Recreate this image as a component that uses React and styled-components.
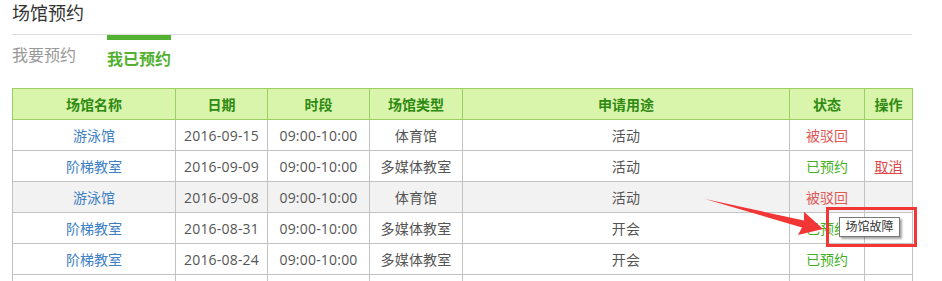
import styled, { createGlobalStyle } from 'styled-components';

const GlobalStyle = createGlobalStyle`
  body {
    margin: 0;
    background: #fff;
    font-family: "Open Sans", "Noto Sans CJK SC", sans-serif;
  }
`;

const columns = [
  {title: '场馆名称', width: 163},
  {title: '日期', width: 92},
  {title: '时段', width: 102},
  {title: '场馆类型', width: 93},
  {title: '申请用途', width: 327},
  {title: '状态', width: 75},
  {title: '操作', width: 48},
];

const rows = [
  {venue: '游泳馆', date: '2016-09-15', time: '09:00-10:00', type: '体育馆', use: '活动', state: 'rejected'},
  {venue: '阶梯教室', date: '2016-09-09', time: '09:00-10:00', type: '多媒体教室', use: '活动', state: 'booked', cancel: true},
  {venue: '游泳馆', date: '2016-09-08', time: '09:00-10:00', type: '体育馆', use: '活动', state: 'rejected', shaded: true},
  {venue: '阶梯教室', date: '2016-08-31', time: '09:00-10:00', type: '多媒体教室', use: '开会', state: 'booked'},
  {venue: '阶梯教室', date: '2016-08-24', time: '09:00-10:00', type: '多媒体教室', use: '开会', state: 'booked'},
];

const stateText = {rejected: '被驳回', booked: '已预约'};

function App() {
  return (
    <>
      <GlobalStyle />
      <Page>
        <Title>场馆预约</Title>
        <TabBar>
          <Tab>我要预约</Tab>
          <Tab active>我已预约</Tab>
        </TabBar>
        <Table>
          <colgroup>
            {columns.map((c) => (
              <Col key={c.title} $w={c.width} />
            ))}
          </colgroup>
          <thead>
            <tr>
              {columns.map((c) => (
                <Th key={c.title}>{c.title}</Th>
              ))}
            </tr>
          </thead>
          <tbody>
            {rows.map((r, i) => (
              <Row key={i} shaded={r.shaded}>
                <Td><VenueLink>{r.venue}</VenueLink></Td>
                <Td>{r.date}</Td>
                <Td>{r.time}</Td>
                <Td>{r.type}</Td>
                <Td>{r.use}</Td>
                <Td><State state={r.state}>{stateText[r.state]}</State></Td>
                <Td>{r.cancel && <Cancel>取消</Cancel>}</Td>
              </Row>
            ))}
            {/* 下一行只露出边框 */}
            <Row>
              {columns.map((c) => (
                <Td key={c.title} />
              ))}
            </Row>
          </tbody>
        </Table>

        <Arrow width="942" height="281" viewBox="0 0 942 281">
          <polygon
            points="705,199 804,220.5 804,211.8 823,229 798,235 802,227.5"
            fill="#f23535"
          />
        </Arrow>
        <Highlight />
        <Tooltip>场馆故障</Tooltip>
      </Page>
    </>
  );
}

export default App;

const Page = styled.div`
  position: relative;
  width: 900px;
  padding-left: 12px;
`;

const Title = styled.h1`
  margin: 0;
  height: 34px;
  line-height: 26px;
  font-size: 18px;
  font-weight: normal;
  color: #333;
  border-bottom: 1px solid #ddd;
`;

const TabBar = styled.div`
  display: flex;
  align-items: flex-start;
  gap: 31px;
  height: 53px;
`;

const Tab = styled.div`
  font-size: 16px;
  line-height: 20px;
  border-top: ${({active}) => (active ? '5px solid #52b130' : '0')};
  padding-top: ${({active}) => (active ? '9px' : '10px')};
  color: ${({active}) => (active ? '#52b130' : '#999')};
  font-weight: ${({active}) => (active ? 'bold' : 'normal')};
`;

const Table = styled.table`
  width: 900px;
  table-layout: fixed;
  border-collapse: collapse;
  font-size: 14px;
`;

const Col = styled.col`
  width: ${({$w}) => $w}px;
`;

const Th = styled.th`
  height: 30px;
  padding: 0;
  background: #d8f5ab;
  border: 1px solid #9ccf61;
  color: #2f8a12;
  font-weight: bold;
  text-align: center;
`;

const Row = styled.tr`
  background: ${({shaded}) => (shaded ? '#f2f2f2' : '#fff')};
`;

const Td = styled.td`
  height: 30px;
  padding: 0;
  border: 1px solid #c2c2c2;
  color: #555;
  text-align: center;
  white-space: nowrap;
  letter-spacing: 0.2px;
`;

const VenueLink = styled.span`
  color: #3d80c4;
  letter-spacing: 0;
`;

const State = styled.span`
  color: ${({state}) => (state === 'rejected' ? '#e05858' : '#45b01e')};
  letter-spacing: 0;
`;

const Cancel = styled.span`
  color: #e04848;
  text-decoration: underline;
  letter-spacing: 0;
`;

const Arrow = styled.svg`
  position: absolute;
  left: 0;
  top: 0;
  pointer-events: none;
`;

const Highlight = styled.div`
  position: absolute;
  left: 826px;
  top: 207px;
  width: 85px;
  height: 34px;
  border: 3px solid #f23535;
`;

const Tooltip = styled.div`
  position: absolute;
  left: 839px;
  top: 217px;
  width: 59px;
  height: 18px;
  border: 1px solid #767676;
  background: #fff;
  box-shadow: 2px 2px 2px rgba(0, 0, 0, 0.35);
  font-size: 12px;
  line-height: 18px;
  text-align: center;
  color: #333;
`;
